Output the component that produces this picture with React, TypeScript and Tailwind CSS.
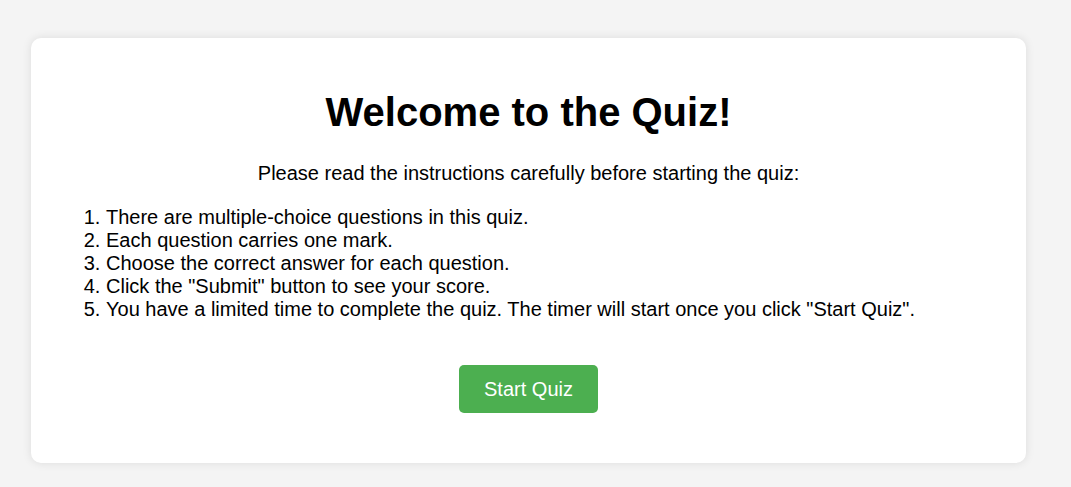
const rules = [
  'There are multiple-choice questions in this quiz.',
  'Each question carries one mark.',
  'Choose the correct answer for each question.',
  'Click the "Submit" button to see your score.',
  'You have a limited time to complete the quiz. The timer will start once you click "Start Quiz".',
];

export default function App() {
  return (
    <div className="min-h-screen bg-[#f4f4f4] pt-[38px] pl-[31px] font-['Liberation_Sans',Arial,sans-serif] text-black">
      <div className="w-[995px] h-[425px] rounded-[10px] bg-white px-5 pt-[51px] shadow-[0_0_10px_rgba(0,0,0,0.1)]">
        <h1 className="text-center text-[40px] font-bold leading-[46px]">Welcome to the Quiz!</h1>
        <p className="mt-[27px] text-center text-[20px] leading-[23px]">
          Please read the instructions carefully before starting the quiz:
        </p>
        <ol className="mt-[21px] list-decimal pl-[55px] text-[20px] leading-[23px]">
          {rules.map((rule) => (
            <li key={rule}>{rule}</li>
          ))}
        </ol>
        <div className="mt-[44px] flex justify-center">
          <button
            type="button"
            className="rounded-[5px] bg-[#4caf50] px-[25px] py-3 text-[20px] leading-[24px] text-white"
          >
            Start Quiz
          </button>
        </div>
      </div>
    </div>
  );
}
